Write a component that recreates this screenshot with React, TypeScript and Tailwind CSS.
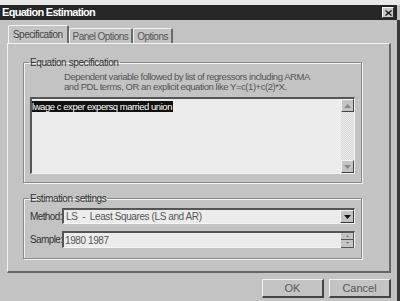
import React from "react"

const font = { fontFamily: '"Liberation Sans", Arial, sans-serif' }

function Tab({ label, active }: { label: string; active?: boolean }) {
  return (
    <div
      className={
        active
          ? "h-[18px] px-[4px] flex items-center border-t border-l border-[#f4f4f4] border-r-2 border-r-[#6a6a6a] rounded-t-[2px] bg-[#c4c4c4] text-[#444] -mb-px relative z-10 tracking-[-0.55px]"
          : "h-[15px] px-[3px] flex items-center border-t border-l border-[#f0f0f0] border-r-2 border-r-[#6a6a6a] rounded-t-[2px] text-[#555] mt-[3px] tracking-[-0.55px]"
      }
    >
      {label}
    </div>
  )
}

function Group({ title, className, children }: { title: string; className?: string; children: React.ReactNode }) {
  return (
    <fieldset className={`border border-[#8a8a8a] shadow-[1px_1px_0_#f2f2f2,inset_1px_1px_0_#f2f2f2] px-[6px] ${className ?? ""}`}>
      <legend className="ml-[-1px] px-[1px] leading-[11px] text-[#333]">{title}</legend>
      {children}
    </fieldset>
  )
}

function Sunken({ className, children }: { className?: string; children?: React.ReactNode }) {
  return (
    <div className={`border-t-2 border-l-2 border-t-[#555] border-l-[#555] border-b border-r border-b-[#f6f6f6] border-r-[#f6f6f6] bg-[#ececec] ${className ?? ""}`}>
      {children}
    </div>
  )
}

function ScrollBtn({ down }: { down?: boolean }) {
  return (
    <div className="w-[13px] h-[13px] bg-[#c4c4c4] border-t border-l border-[#f4f4f4] border-r border-b border-r-[#444] border-b-[#444] flex items-center justify-center">
      <svg width="7" height="4" viewBox="0 0 7 4">
        <path d={down ? "M0 0h7L3.5 4z" : "M3.5 0L7 4H0z"} fill="#888" />
      </svg>
    </div>
  )
}

export default function App() {
  return (
    <div style={font} className="w-[400px] h-[301px] bg-[#c3c3c3] flex flex-col overflow-hidden text-[10px] tracking-[-0.4px] text-[#444]">
      <div className="h-[5px] bg-[#e8e8e8] shrink-0" />
      <div className="h-[15px] mr-[3px] bg-[#262626] flex items-center justify-between pl-[2px] pr-[3px] shrink-0">
        <span className="text-white font-bold text-[11px] tracking-[-0.7px]">Equation Estimation</span>
        <div className="w-[12px] h-[11px] bg-[#c8c8c8] border-t border-l border-[#f4f4f4] border-r border-b border-r-[#333] border-b-[#333] flex items-center justify-center">
          <svg width="7" height="6" viewBox="0 0 7 6">
            <path d="M0.5 0.5l6 5M6.5 0.5l-6 5" stroke="#111" strokeWidth="1.3" />
          </svg>
        </div>
      </div>

      <div className="flex-1 flex flex-col border-r-[3px] border-r-[#3a3a3a] pl-[7px] pr-[6px] pt-[5px]">
        <div className="flex pl-[1px] h-[18px] items-start">
          <Tab label="Specification" active />
          <Tab label="Panel Options" />
          <Tab label="Options" />
        </div>

        <div className="h-[230px] border-t border-l border-[#f2f2f2] border-r-2 border-b-2 border-r-[#666] border-b-[#666] pl-[15px] pr-[27px] pt-[13px] flex flex-col">
          <Group title="Equation specification" className="h-[126px] pb-[6px]">
            <div className="pl-[34px] leading-[10px] text-[9.5px] tracking-[-0.45px] text-[#555] mt-[4px] whitespace-nowrap">
              <div>Dependent variable followed by list of regressors including ARMA</div>
              <div>and PDL terms, OR an explicit equation like Y=c(1)+c(2)*X.</div>
            </div>
            <Sunken className="mt-[5px] h-[77px] flex">
              <div className="flex-1 pt-[1px] text-[9.5px] tracking-[-0.45px]">
                <span className="bg-[#111] text-white leading-[10px] pr-[1px]">lwage c exper expersq married union</span>
              </div>
              <div className="w-[13px] flex flex-col justify-between bg-[repeating-conic-gradient(#d8d8d8_0%_25%,#ececec_0%_50%)] bg-[length:2px_2px]">
                <ScrollBtn />
                <ScrollBtn down />
              </div>
            </Sunken>
          </Group>

          <Group title="Estimation settings" className="mt-[10px] h-[66px]">
            <div className="flex items-center mt-[4px]">
              <span className="w-[32px] shrink-0 whitespace-nowrap tracking-[-0.6px] text-[#333]">Method:</span>
              <Sunken className="flex-1 h-[16px] flex items-center">
                <span className="flex-1 pl-[2px] text-[#555] whitespace-pre">LS  -  Least Squares (LS and AR)</span>
                <div className="w-[14px] h-[13px] bg-[#c4c4c4] border-t border-l border-[#f4f4f4] border-r border-b border-r-[#333] border-b-[#333] flex items-center justify-center">
                  <svg width="7" height="4" viewBox="0 0 7 4"><path d="M0 0h7L3.5 4z" fill="#111" /></svg>
                </div>
              </Sunken>
            </div>
            <div className="flex items-center mt-[7px]">
              <span className="w-[32px] shrink-0 whitespace-nowrap tracking-[-0.6px] text-[#333]">Sample:</span>
              <Sunken className="flex-1 h-[17px] flex items-center">
                <span className="flex-1 pl-[1px] text-[#555]">1980 1987</span>
                <div className="w-[13px] h-[15px] flex flex-col">
                  <div className="h-[7px] bg-[#c4c4c4] border-b border-r border-[#555] flex items-center justify-center">
                    <svg width="3" height="2" viewBox="0 0 3 2"><path d="M1.5 0L3 2H0z" fill="#777" /></svg>
                  </div>
                  <div className="h-[8px] bg-[#c4c4c4] border-b border-r border-[#555] flex items-center justify-center">
                    <svg width="3" height="2" viewBox="0 0 3 2"><path d="M0 0h3L1.5 2z" fill="#777" /></svg>
                  </div>
                </div>
              </Sunken>
            </div>
          </Group>
        </div>

        <div className="flex justify-end gap-[5px] mt-[6px]">
          <button className="w-[62px] h-[19px] bg-[#c4c4c4] border-t border-l border-[#f2f2f2] border-r-2 border-b-2 border-r-[#444] border-b-[#444] text-[#555] text-[11px] tracking-normal">OK</button>
          <button className="w-[62px] h-[19px] bg-[#c4c4c4] border-t border-l border-[#f2f2f2] border-r-2 border-b-2 border-r-[#444] border-b-[#444] text-[#555] text-[11px] tracking-normal">Cancel</button>
        </div>
      </div>
    </div>
  )
}
